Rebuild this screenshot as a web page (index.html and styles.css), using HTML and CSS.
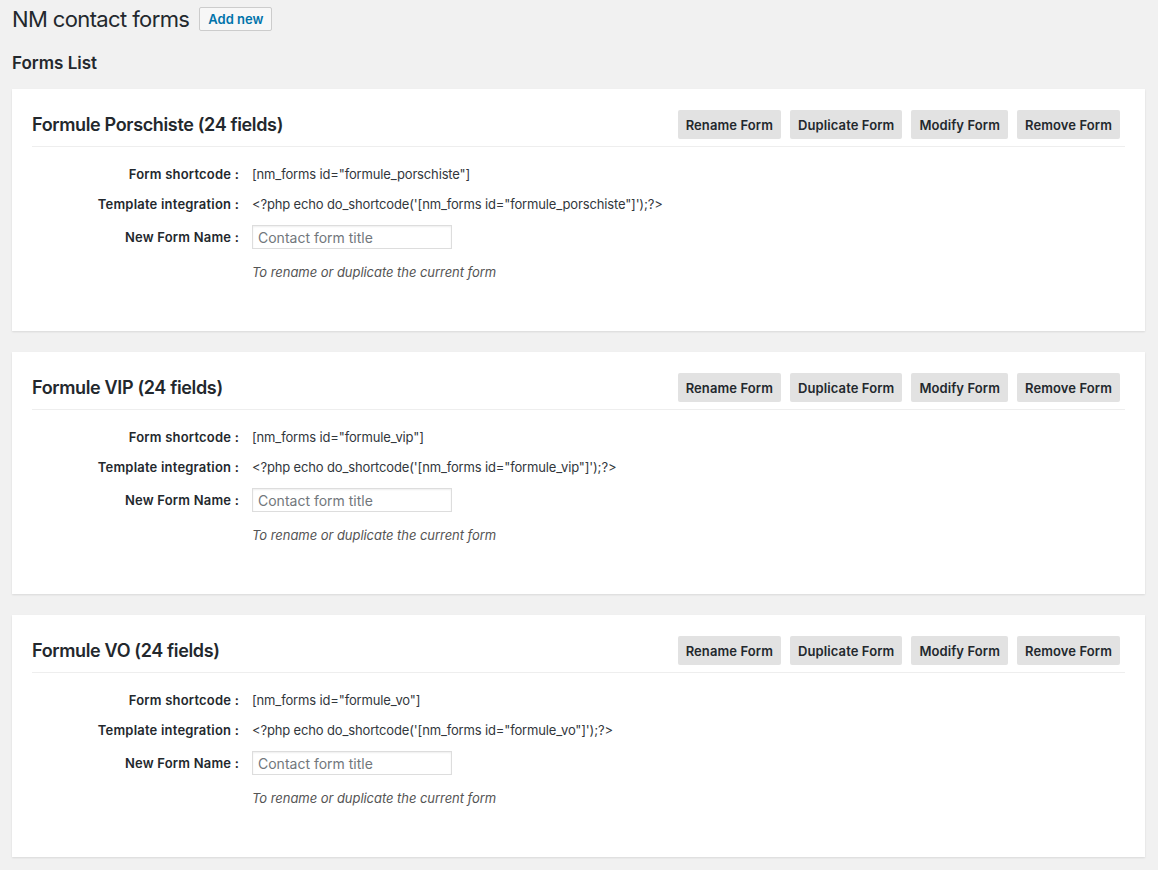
FILE: index.html
```html
<!DOCTYPE html>
<html lang="en">
<head>
<meta charset="utf-8">
<title>NM contact forms</title>
<link rel="stylesheet" href="styles.css">
</head>
<body>
<div class="wrap">
  <div class="page-head">
    <h1 class="page-title">NM contact forms</h1>
    <a class="add-new" href="#">Add new</a>
  </div>
  <h2 class="list-title">Forms List</h2>

  <div class="card">
    <div class="card-head">
      <h3 class="card-title">Formule Porschiste (24 fields)</h3>
      <div class="actions">
        <button class="btn">Rename Form</button>
        <button class="btn">Duplicate Form</button>
        <button class="btn">Modify Form</button>
        <button class="btn">Remove Form</button>
      </div>
    </div>
    <div class="card-body">
      <div class="row"><span class="label">Form shortcode :</span><span class="value">[nm_forms id="formule_porschiste"]</span></div>
      <div class="row"><span class="label">Template integration :</span><span class="value">&lt;?php echo do_shortcode('[nm_forms id="formule_porschiste"]');?&gt;</span></div>
      <div class="row row-input"><span class="label">New Form Name :</span><span class="value"><input class="name-input" type="text" placeholder="Contact form title"></span></div>
      <div class="row row-hint"><span class="label"></span><span class="value hint">To rename or duplicate the current form</span></div>
    </div>
  </div>

  <div class="card">
    <div class="card-head">
      <h3 class="card-title">Formule VIP (24 fields)</h3>
      <div class="actions">
        <button class="btn">Rename Form</button>
        <button class="btn">Duplicate Form</button>
        <button class="btn">Modify Form</button>
        <button class="btn">Remove Form</button>
      </div>
    </div>
    <div class="card-body">
      <div class="row"><span class="label">Form shortcode :</span><span class="value">[nm_forms id="formule_vip"]</span></div>
      <div class="row"><span class="label">Template integration :</span><span class="value">&lt;?php echo do_shortcode('[nm_forms id="formule_vip"]');?&gt;</span></div>
      <div class="row row-input"><span class="label">New Form Name :</span><span class="value"><input class="name-input" type="text" placeholder="Contact form title"></span></div>
      <div class="row row-hint"><span class="label"></span><span class="value hint">To rename or duplicate the current form</span></div>
    </div>
  </div>

  <div class="card">
    <div class="card-head">
      <h3 class="card-title">Formule VO (24 fields)</h3>
      <div class="actions">
        <button class="btn">Rename Form</button>
        <button class="btn">Duplicate Form</button>
        <button class="btn">Modify Form</button>
        <button class="btn">Remove Form</button>
      </div>
    </div>
    <div class="card-body">
      <div class="row"><span class="label">Form shortcode :</span><span class="value">[nm_forms id="formule_vo"]</span></div>
      <div class="row"><span class="label">Template integration :</span><span class="value">&lt;?php echo do_shortcode('[nm_forms id="formule_vo"]');?&gt;</span></div>
      <div class="row row-input"><span class="label">New Form Name :</span><span class="value"><input class="name-input" type="text" placeholder="Contact form title"></span></div>
      <div class="row row-hint"><span class="label"></span><span class="value hint">To rename or duplicate the current form</span></div>
    </div>
  </div>
</div>
</body>
</html>
```
FILE: styles.css
```css
* { box-sizing: border-box; }
html, body {
  margin: 0;
  padding: 0;
  background: #f1f1f1;
}
body {
  font-family: Inter, "Noto Sans", "Liberation Sans", sans-serif;
  color: #23282d;
  font-size: 13px;
}
.wrap {
  padding: 7px 13px 0 12px;
}
.page-head {
  display: flex;
  align-items: center;
  height: 24px;
}
.page-title {
  margin: 0;
  font-size: 22px;
  line-height: 24px;
  letter-spacing: -0.62px;
  font-weight: 400;
  color: #23282d;
}
.add-new {
  margin-left: 10px;
  height: 24px;
  padding: 0 8px;
  display: inline-flex;
  align-items: center;
  border: 1px solid #ccc;
  border-radius: 2px;
  background: #f7f7f7;
  color: #0073aa;
  font-size: 13px;
  font-weight: 600;
  text-decoration: none;
}
.list-title {
  margin: 22px 0 16px;
  font-size: 17px;
  line-height: 20px;
  font-weight: 600;
  color: #23282d;
}
.card {
  background: #fff;
  box-shadow: 0 1px 2px rgba(0,0,0,0.1);
  padding: 21px 20px 44px 20px;
  margin-bottom: 21px;
}
.card-head {
  display: flex;
  align-items: center;
  justify-content: space-between;
  padding-bottom: 7px;
  border-bottom: 1px solid #eee;
}
.card-title {
  margin: 0;
  font-size: 18px;
  line-height: 29px;
  letter-spacing: -0.35px;
  font-weight: 600;
  color: #23282d;
}
.actions {
  display: flex;
  gap: 9px;
  margin-right: 5px;
}
.btn {
  height: 29px;
  padding: 0 8px;
  border: 0;
  border-radius: 2px;
  background: #e2e2e2;
  color: #23282d;
  font-family: inherit;
  font-size: 13px;
  font-weight: 600;
  letter-spacing: 0.1px;
}
.card-body {
  padding-top: 12px;
}
.row {
  display: grid;
  grid-template-columns: 207px 1fr;
  column-gap: 13px;
  align-items: center;
  height: 30px;
}
.row-input { margin-top: 3px; }
.row-hint { margin-top: 5px; }
.label {
  text-align: right;
  font-weight: 600;
  letter-spacing: 0.2px;
}
.value {
  color: #32373c;
  letter-spacing: -0.15px;
}
.name-input {
  display: block;
  width: 200px;
  height: 24px;
  border: 1px solid #ddd;
  border-radius: 0;
  padding: 0 5px;
  font-family: inherit;
  font-size: 14px;
  color: #32373c;
  box-shadow: inset 0 1px 2px rgba(0,0,0,0.07);
}
.name-input::placeholder { color: #72777c; }
.hint {
  font-style: italic;
  color: #555;
  letter-spacing: -0.05px;
}
```
